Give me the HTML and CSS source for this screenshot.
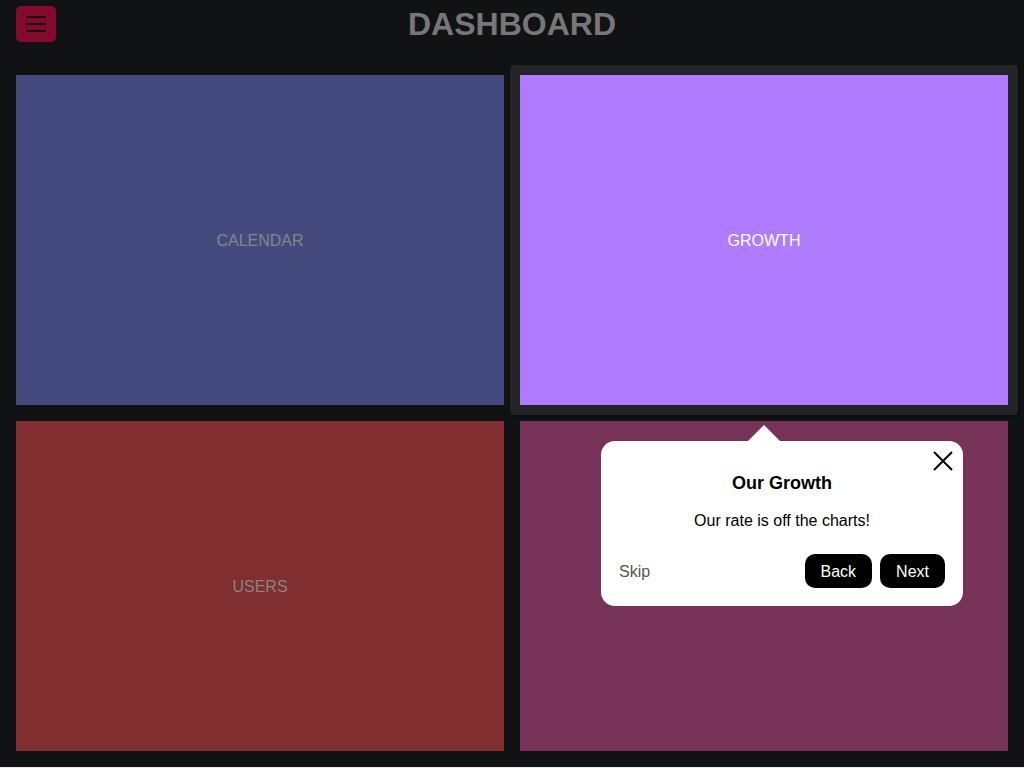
FILE: index.html
```html
<!DOCTYPE html>
<html>
<head>
<meta charset="utf-8">
<link rel="stylesheet" href="styles.css">
</head>
<body>
<div class="app">
  <header class="header">
    <button class="menu-btn" aria-label="menu">
      <span></span><span></span><span></span>
    </button>
    <h1 class="title">DASHBOARD</h1>
    <div></div>
  </header>
  <main class="grid">
    <div class="tile tile-calendar">CALENDAR</div>
    <div class="tile-wrap">
      <div class="highlight"></div>
      <div class="tile tile-growth">GROWTH</div>
    </div>
    <div class="tile tile-users">USERS</div>
    <div class="tile-wrap">
      <div class="tile tile-other"></div>
      <div class="tour">
        <div class="tour-arrow"></div>
        <button class="tour-close" aria-label="close">
          <svg width="20" height="20" viewBox="0 0 20 20"><path d="M1 1 L19 19 M19 1 L1 19" stroke="#000" stroke-width="2" fill="none"/></svg>
        </button>
        <div class="tour-title">Our Growth</div>
        <div class="tour-body">Our rate is off the charts!</div>
        <div class="tour-footer">
          <span class="tour-skip">Skip</span>
          <div class="tour-buttons">
            <button class="tour-btn">Back</button>
            <button class="tour-btn">Next</button>
          </div>
        </div>
      </div>
    </div>
  </main>
</div>
</body>
</html>
```
FILE: styles.css
```css
html {
  background: #e8e8e8;
}
body {
  margin: 0;
  font-family: "Liberation Sans", Arial, sans-serif;
}
.app {
  background: #111214;
  height: 767px;
  padding: 0 16px;
  box-sizing: border-box;
}
.header {
  display: grid;
  grid-template-columns: 1fr auto 1fr;
  align-items: center;
  height: 48px;
}
.menu-btn {
  width: 40px;
  height: 36px;
  background: #850a2e;
  border: none;
  border-radius: 5px;
  display: flex;
  flex-direction: column;
  align-items: center;
  justify-content: center;
  gap: 5px;
  padding: 0;
}
.menu-btn span {
  display: block;
  width: 20px;
  height: 2px;
  background: #111;
}
.title {
  margin: 0;
  font-size: 32px;
  font-weight: bold;
  color: #777;
  line-height: 48px;
}
.grid {
  margin-top: 27px;
  display: grid;
  grid-template-columns: 1fr 1fr;
  grid-template-rows: 330px 330px;
  gap: 16px;
}
.tile-wrap {
  position: relative;
}
.tile {
  height: 330px;
  box-sizing: border-box;
  padding-top: 2px;
  display: flex;
  align-items: center;
  justify-content: center;
  font-size: 16px;
  color: #858585;
  position: relative;
}
.tile-calendar { background: #454a7e; }
.tile-growth { background: #b07cff; color: #fff; }
.tile-users { background: #812e30; }
.tile-other { background: #773257; }
.highlight {
  position: absolute;
  top: -10px;
  left: -10px;
  right: -10px;
  bottom: -10px;
  background: #232425;
  border-radius: 4px;
  box-shadow: 1px 1px 3px rgba(0,0,0,0.5);
}
.tour {
  position: absolute;
  top: 20px;
  left: 81px;
  width: 362px;
  height: 165px;
  box-sizing: border-box;
  background: #fff;
  border-radius: 14px;
  padding: 31px 18px 18px;
  display: flex;
  flex-direction: column;
  align-items: center;
  z-index: 5;
}
.tour-arrow {
  position: absolute;
  top: -16px;
  left: 147px;
  width: 0;
  height: 0;
  border-left: 16px solid transparent;
  border-right: 16px solid transparent;
  border-bottom: 16px solid #fff;
}
.tour-close {
  position: absolute;
  top: 10px;
  right: 10px;
  width: 20px;
  height: 20px;
  padding: 0;
  border: none;
  background: none;
}
.tour-close svg { display: block; }
.tour-title {
  font-size: 18px;
  font-weight: bold;
  color: #000;
  line-height: 22px;
}
.tour-body {
  margin-top: 18px;
  font-size: 16px;
  color: #000;
  line-height: 18px;
}
.tour-footer {
  margin-top: auto;
  align-self: stretch;
  display: flex;
  align-items: center;
  justify-content: space-between;
}
.tour-skip {
  font-size: 16px;
  color: #555;
  padding-top: 2px;
}
.tour-buttons {
  display: flex;
  gap: 8px;
}
.tour-btn {
  font-family: "Liberation Sans", Arial, sans-serif;
  font-size: 16px;
  color: #fff;
  background: #000;
  border: none;
  border-radius: 10px;
  height: 34px;
  padding: 2px 16px 0;
}
```
